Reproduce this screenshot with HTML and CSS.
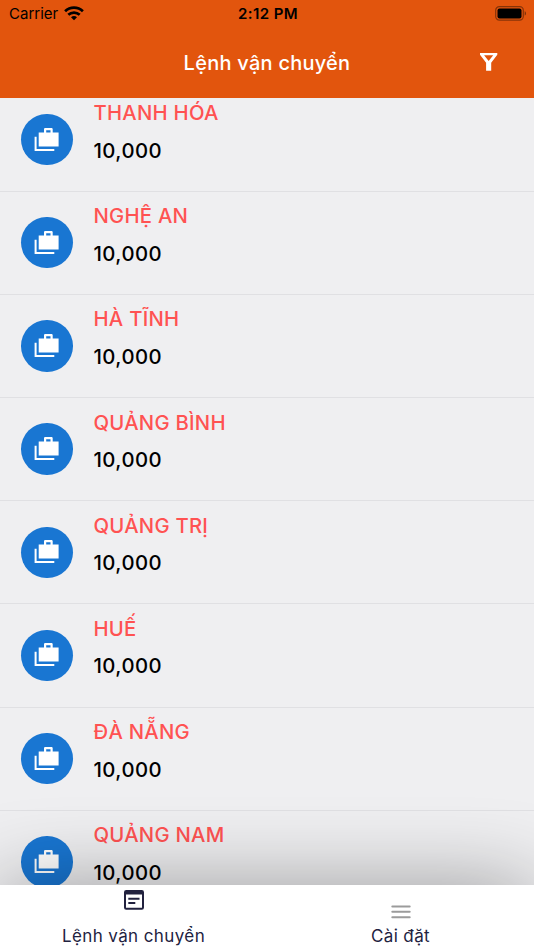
FILE: index.html
```html
<!DOCTYPE html>
<html lang="vi">
<head>
  <meta charset="UTF-8">
  <meta name="viewport" content="width=device-width, initial-scale=1.0">
  <title>Lệnh vận chuyển</title>
  <link rel="stylesheet" href="styles.css">
</head>
<body>

  <!-- Shared icon for the list rows -->
  <svg class="sprite" width="0" height="0">
    <symbol id="cases" viewBox="0 0 25 24">
      <path fill="#fff" fill-rule="evenodd" d="M4.7 4.4H10V.7L10.8 0H17.9L18.7 .7V4.4H24.6V18.6H4.7ZM12.2 4.4H16.5V2.2H12.2Z"/>
      <path fill="#fff" d="M.6 8.7H2.6V21H20.3V23H.6Z"/>
    </symbol>
  </svg>

  <header class="header">
    <div class="status">
      <div class="carrier">
        <span>Carrier</span>
        <svg width="20" height="15" viewBox="0 0 20 15" fill="none" stroke="#000" stroke-width="2.7">
          <path d="M1.1 5.3C6.1 .5 13.9 .5 18.9 5.3"/>
          <path d="M4.3 8.8C7.5 5.8 12.5 5.8 15.7 8.8"/>
          <path d="M7 11.2C8.7 9.6 11.3 9.6 13 11.2L10 14.2Z" fill="#000" stroke="none"/>
        </svg>
      </div>
      <div class="time">2:12 PM</div>
      <svg class="battery" width="32" height="15" viewBox="0 0 32 15">
        <rect x=".7" y=".7" width="27.6" height="13.4" rx="3.6" fill="none" stroke="#000" stroke-opacity=".4" stroke-width="1.2"/>
        <rect x="2.5" y="2.4" width="24" height="10" rx="2" fill="#000"/>
        <path d="M29.7 5.2C31.4 5.8 31.4 9 29.7 9.6Z" fill="#000" fill-opacity=".45"/>
      </svg>
    </div>
    <div class="navbar">
      <h1 class="title">Lệnh vận chuyển</h1>
      <svg class="filter" width="18" height="18" viewBox="0 0 18 18">
        <path fill="#fff" fill-rule="evenodd" d="M0 0H17.3V1.8L11.2 9.8V17.8H6.1V9.8L0 1.8ZM4.1 2.2L8.65 8.1L13.2 2.2Z"/>
      </svg>
    </div>
  </header>

  <main class="list">
    <div class="row">
      <div class="avatar"><svg width="25" height="24"><use href="#cases"/></svg></div>
      <div class="info"><div class="name">THANH HÓA</div><div class="amount">10,000</div></div>
    </div>
    <div class="row">
      <div class="avatar"><svg width="25" height="24"><use href="#cases"/></svg></div>
      <div class="info"><div class="name">NGHỆ AN</div><div class="amount">10,000</div></div>
    </div>
    <div class="row">
      <div class="avatar"><svg width="25" height="24"><use href="#cases"/></svg></div>
      <div class="info"><div class="name">HÀ TĨNH</div><div class="amount">10,000</div></div>
    </div>
    <div class="row">
      <div class="avatar"><svg width="25" height="24"><use href="#cases"/></svg></div>
      <div class="info"><div class="name">QUẢNG BÌNH</div><div class="amount">10,000</div></div>
    </div>
    <div class="row">
      <div class="avatar"><svg width="25" height="24"><use href="#cases"/></svg></div>
      <div class="info"><div class="name">QUẢNG TRỊ</div><div class="amount">10,000</div></div>
    </div>
    <div class="row">
      <div class="avatar"><svg width="25" height="24"><use href="#cases"/></svg></div>
      <div class="info"><div class="name">HUẾ</div><div class="amount">10,000</div></div>
    </div>
    <div class="row">
      <div class="avatar"><svg width="25" height="24"><use href="#cases"/></svg></div>
      <div class="info"><div class="name">ĐÀ NẴNG</div><div class="amount">10,000</div></div>
    </div>
    <div class="row">
      <div class="avatar"><svg width="25" height="24"><use href="#cases"/></svg></div>
      <div class="info"><div class="name">QUẢNG NAM</div><div class="amount">10,000</div></div>
    </div>
  </main>

  <nav class="tabs">
    <a class="tab">
      <svg class="tab-icon" width="20" height="20" viewBox="0 0 20 20">
        <path fill="#22223f" fill-rule="evenodd" d="M2.2 0H17.8Q20 0 20 2.2V17.5Q20 19.7 17.8 19.7H2.2Q0 19.7 0 17.5V2.2Q0 0 2.2 0ZM2 4.4V17.7H18V4.4Z"/>
        <path fill="#22223f" d="M4.3 7.7H15.5V9.7H4.3ZM4.3 12H11.3V14H4.3Z"/>
      </svg>
      <span>Lệnh vận chuyển</span>
    </a>
    <a class="tab">
      <svg class="menu-icon" width="20" height="14" viewBox="0 0 20 14" stroke="#9b9b9b" stroke-width="2" stroke-linecap="round">
        <path d="M1.3 1.5H18.7M1.3 6.8H18.7M1.3 12.2H18.7"/>
      </svg>
      <span>Cài đặt</span>
    </a>
  </nav>

</body>
</html>
```
FILE: styles.css
```css
* {
  box-sizing: border-box;
}

body {
  margin: 0;
  height: 100vh;
  display: flex;
  flex-direction: column;
  overflow: hidden;
  background-color: #efeff1;
  font-family: 'Inter', 'Liberation Sans', sans-serif;
}

.sprite {
  display: none;
}

.header {
  flex: none;
  height: 98px;
  background-color: #e2550d;
}

.status {
  display: grid;
  grid-template-columns: 1fr auto 1fr;
  align-items: center;
  height: 27px;
  padding: 0 7px 0 9px;
  color: #000;
  font-size: 15px;
}

.carrier {
  display: flex;
  align-items: center;
  gap: 6px;
}

.time {
  font-weight: 600;
  letter-spacing: 0.4px;
}

.battery {
  justify-self: end;
}

.navbar {
  display: grid;
  grid-template-columns: 1fr auto 1fr;
  align-items: center;
  height: 70px;
  padding: 0 36px;
}

.title {
  grid-column: 2;
  margin: 0;
  padding-top: 1px;
  color: #fff;
  font-size: 20px;
  font-weight: 500;
  letter-spacing: 0.25px;
}

.filter {
  justify-self: end;
}

.list {
  flex: 1;
  min-height: 0;
  overflow: hidden;
  margin-top: -9.6px; /* list is slightly scrolled under the header */
}

.header,
.tabs {
  position: relative;
  z-index: 1;
}

.row {
  display: flex;
  align-items: center;
  gap: 21px;
  height: 103.2px;
  padding-left: 21px;
  border-bottom: 1px solid #e0e0e3;
}

.avatar {
  display: flex;
  align-items: center;
  justify-content: center;
  width: 51.5px;
  height: 51.5px;
  border-radius: 50%;
  background-color: #1976d2;
}

.info {
  height: 100%;
  padding-top: 10.6px;
  font-size: 20.3px;
  font-weight: 450;
  line-height: 28px;
}

.name {
  color: #ff5252;
  letter-spacing: 0.25px;
  margin-bottom: 9.5px;
}

.amount {
  color: #000;
  letter-spacing: 0.45px;
}

.tabs {
  flex: none;
  display: flex;
  height: 65px;
  background-color: #fff;
  box-shadow: 0 9px 88px rgba(0, 0, 0, 0.46);
}

.tab {
  flex: 1;
  display: flex;
  flex-direction: column;
  align-items: center;
  color: #22223f;
  font-size: 17px;
  line-height: 22px;
  letter-spacing: 0.4px;
}

.tab-icon {
  margin: 5px 0 15px;
}

.menu-icon {
  margin: 20px 0 6px;
}
```
